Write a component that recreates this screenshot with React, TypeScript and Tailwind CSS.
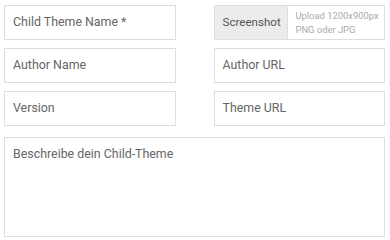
export default function App() {
  return (
    <div className="bg-white pl-[4px] pr-[5px] pt-[5px] text-[12.4px] text-[#666]" style={{ fontFamily: 'Roboto, "Liberation Sans", sans-serif' }}>
      <div className="grid grid-cols-2 gap-x-[38px] gap-y-[8px]">
        <div className="h-[35px] border border-[#dedede] flex items-center px-[8px]">Child Theme Name *</div>
        <div className="h-[35px] border border-[#dedede] flex">
          <div className="w-[73px] shrink-0 bg-[#ececec] flex items-center px-[8px] text-[11.6px] text-[#555] border-r border-[#dedede]">Screenshot</div>
          <div className="flex-1 flex flex-col justify-center px-[8px] text-[9.4px] leading-[14px] text-[#aaa] whitespace-nowrap">
            <span>Upload 1200x900px</span>
            <span>PNG oder JPG</span>
          </div>
        </div>
        <div className="h-[35px] border border-[#dedede] flex items-center px-[8px]">Author Name</div>
        <div className="h-[35px] border border-[#dedede] flex items-center px-[8px]">Author URL</div>
        <div className="h-[35px] border border-[#dedede] flex items-center px-[8px]">Version</div>
        <div className="h-[35px] border border-[#dedede] flex items-center px-[8px]">Theme URL</div>
      </div>
      <div className="mt-[11px] h-[100px] border border-[#dedede] px-[8px] pt-[7px]">Beschreibe dein Child-Theme</div>
    </div>
  )
}
